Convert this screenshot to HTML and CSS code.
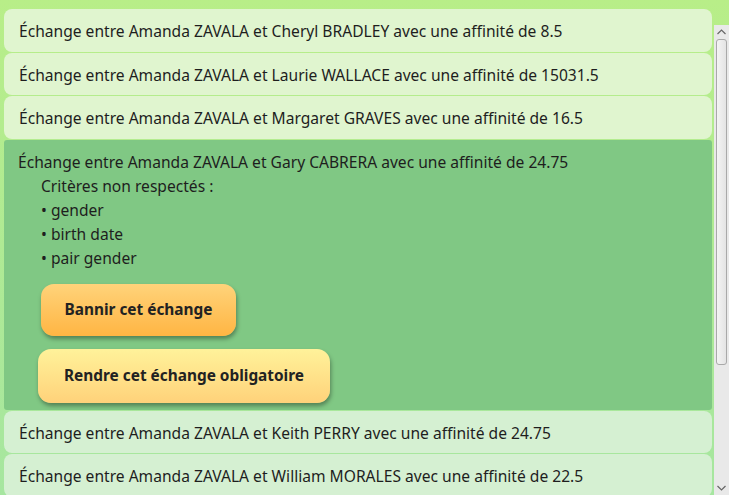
FILE: index.html
```html
<!DOCTYPE html>
<html lang="fr">
<head>
<meta charset="utf-8">
<link rel="stylesheet" href="styles.css">
</head>
<body>
<div class="frame">
  <div class="list">
    <div class="item">Échange entre Amanda ZAVALA et Cheryl BRADLEY avec une affinité de 8.5</div>
    <div class="item">Échange entre Amanda ZAVALA et Laurie WALLACE avec une affinité de 15031.5</div>
    <div class="item">Échange entre Amanda ZAVALA et Margaret GRAVES avec une affinité de 16.5</div>
    <div class="item expanded">
      <div class="title">Échange entre Amanda ZAVALA et Gary CABRERA avec une affinité de 24.75</div>
      <div class="details">
        <div class="line">Critères non respectés :</div>
        <div class="line">• gender</div>
        <div class="line">• birth date</div>
        <div class="line">• pair gender</div>
      </div>
      <button class="btn ban">Bannir cet échange</button>
      <button class="btn force">Rendre cet échange obligatoire</button>
    </div>
    <div class="item alt">Échange entre Amanda ZAVALA et Keith PERRY avec une affinité de 24.75</div>
    <div class="item alt">Échange entre Amanda ZAVALA et William MORALES avec une affinité de 22.5</div>
  </div>
  <div class="scrollbar">
    <svg class="arrow" width="15" height="14" viewBox="0 0 15 14"><path d="M3.5 9 L7.5 5 L11.5 9" fill="none" stroke="#666" stroke-width="1.2"/></svg>
    <div class="track"><div class="thumb"></div></div>
    <svg class="arrow" width="15" height="14" viewBox="0 0 15 14"><path d="M3.5 5 L7.5 9 L11.5 5" fill="none" stroke="#666" stroke-width="1.2"/></svg>
  </div>
</div>
</body>
</html>
```
FILE: styles.css
```css
html, body {
  margin: 0;
  padding: 0;
}
body {
  width: 729px;
  height: 495px;
  overflow: hidden;
  font-family: "Noto Sans", "Open Sans", sans-serif;
  font-size: 15.6px;
  color: #1e1e1e;
  background: linear-gradient(#b8ee88, #a6e6a0);
}
.frame {
  display: flex;
  height: 495px;
  padding-top: 9px;
  box-sizing: border-box;
}
.list {
  flex: 1;
  display: flex;
  flex-direction: column;
  gap: 1px;
  padding-left: 4px;
  overflow: hidden;
}
.item {
  background: #e0f5cf;
  border-radius: 8px;
  height: 42.5px;
  flex: none;
  display: flex;
  align-items: center;
  padding: 2px 0 0 15px;
  box-sizing: border-box;
  white-space: nowrap;
}
.item.alt {
  background: #d5f0d2;
}
.item.expanded {
  background: #80c884;
  border-radius: 3px;
  height: 270px;
  display: block;
  padding: 11px 0 0 14px;
}
.title {
  line-height: 22px;
}
.details {
  padding-left: 23px;
  padding-top: 1px;
}
.line {
  line-height: 24px;
}
.btn {
  display: block;
  font-family: inherit;
  font-weight: bold;
  font-size: 15.4px;
  color: #222;
  border: none;
  border-radius: 13px;
  box-shadow: 1px 3px 4px rgba(0,0,0,0.35);
}
.ban {
  margin: 14px 0 0 23px;
  width: 195px;
  height: 52px;
  background: linear-gradient(#ffd37a, #ffb543);
}
.force {
  margin: 13px 0 0 20px;
  width: 292px;
  height: 54px;
  background: linear-gradient(#fff29a, #ffd27a);
}
.scrollbar {
  width: 15px;
  margin-left: 2px;
  background: #e9e9e9;
  display: flex;
  flex-direction: column;
  margin-top: 16px;
}
.arrow {
  flex: none;
  display: block;
}
.track {
  flex: 1;
  padding: 0 2px;
}
.thumb {
  height: 324px;
  background: linear-gradient(90deg, #f4f4f4, #e4e4e4);
  border: 1px solid #a9a9a9;
  border-radius: 3px;
}
```
